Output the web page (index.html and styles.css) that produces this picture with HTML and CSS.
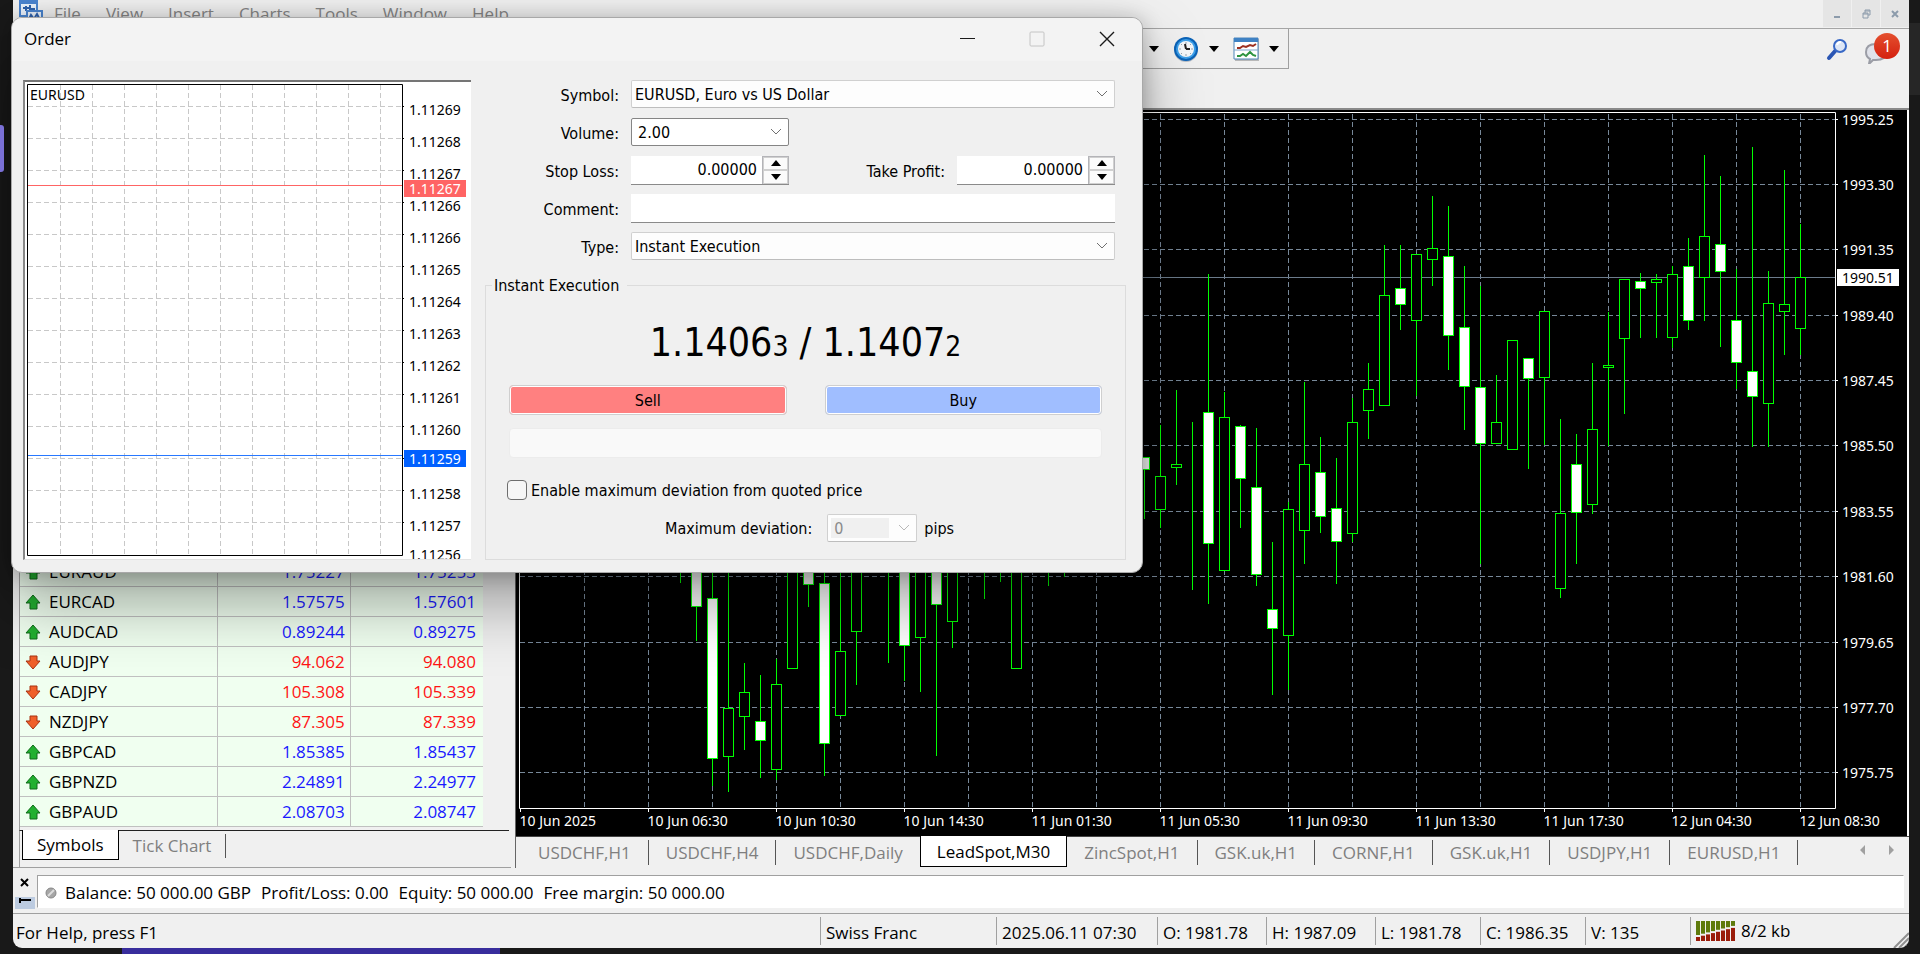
FILE: index.html
```html
<!DOCTYPE html>
<html lang="en">
<head>
    <meta charset="utf-8">
    <title>Trading Terminal</title>
    <link rel="stylesheet" href="styles.css">
</head>

<body>
    <div class="desk-shade"></div>
    <div class="desk-pill"></div>
    <div class="desk-task"></div>

    <div class="app">
        <header class="menubar">
            <svg class="app-logo" width="24" height="20" viewBox="0 0 24 20">
                <path d="M1 1h17v15h-17z" fill="#eaf2fc" stroke="#4a84cf" stroke-width="2"/>
                <path d="M1 1h17v3h-17z" fill="#4a84cf"/>
                <path d="M4 8h3v-2v5M8 8h3v-3v6M12 9h4" fill="none" stroke="#2f62ad" stroke-width="2"/>
                <path d="M8 11h15v9h-15z" fill="#eaf2fc" stroke="#4a84cf" stroke-width="2"/>
                <path d="M10 19l2-4 3 4 3-5 2 4" fill="none" stroke="#2f62ad" stroke-width="2"/>
            </svg>
            <nav class="menu">
                <a href="#">File</a>
                <a href="#">View</a>
                <a href="#">Insert</a>
                <a href="#">Charts</a>
                <a href="#">Tools</a>
                <a href="#">Window</a>
                <a href="#">Help</a>
            </nav>
            <div class="mdi">
                <button type="button" aria-label="Minimize"><svg width="9" height="12" viewBox="0 0 9 12"><path d="M1 9h6" stroke="#8c9bab" stroke-width="2"/></svg></button>
                <button type="button" aria-label="Restore"><svg width="9" height="10" viewBox="0 0 9 10"><path d="M3 4v-3h5v5h-2M1 4h5v5h-5zM1 5h5M3 2h5" fill="none" stroke="#8c9bab"/></svg></button>
                <button type="button" aria-label="Close"><svg width="8" height="8" viewBox="0 0 8 8"><path d="M1 1l6 6M7 1l-6 6" stroke="#8c9bab" stroke-width="2"/></svg></button>
            </div>
        </header>

        <div class="toolbar">
            <div class="tools">
                <svg class="drop" width="10" height="6" viewBox="0 0 10 6"><path d="M0 0h10l-5 6z"/></svg>
                <svg class="tool" width="28" height="28" viewBox="0 0 28 28">
                    <circle cx="14" cy="15" r="12" fill="#b9bec6"/>
                    <circle cx="14" cy="14" r="12" fill="#0b63b8"/>
                    <circle cx="14" cy="14" r="10" fill="#3da0ea"/>
                    <circle cx="14" cy="14" r="8" fill="#f4f7fa"/>
                    <path d="M14 7v2M14 19v2M7 14h2M19 14h2M9 9l1 1M19 9l-1 1M9 19l1-1M19 19l-1-1" stroke="#9aa4ae"/>
                    <path d="M14 14l-1-5M14 14h4" stroke="#222" stroke-width="2"/>
                </svg>
                <svg class="drop" width="10" height="6" viewBox="0 0 10 6"><path d="M0 0h10l-5 6z"/></svg>
                <svg class="tool" width="28" height="28" viewBox="0 0 28 28">
                    <path d="M3 4h24v22h-24z" fill="#b8b8b8"/>
                    <path d="M2 3h24v21h-24z" fill="#fff" stroke="#4f86bb"/>
                    <path d="M2 3h24v4h-24z" fill="#3f82c4"/>
                    <path d="M2 15h24" stroke="#7fa6cc" stroke-width="1"/>
                    <path d="M5 13h3l3-2 3 1 4-2 3 1 3-2" fill="none" stroke="#9c3020" stroke-width="2"/>
                    <path d="M5 21h3l3-2 3 2 4-4 3 3 3 1" fill="none" stroke="#2e9440" stroke-width="2"/>
                </svg>
                <svg class="drop" width="10" height="6" viewBox="0 0 10 6"><path d="M0 0h10l-5 6z"/></svg>
            </div>
            <div class="tools-right">
                <svg width="24" height="24" viewBox="0 0 24 24">
                    <path d="M4 20l7-8" stroke="#2b56b4" stroke-width="4" stroke-linecap="round"/>
                    <circle cx="15" cy="8" r="6" fill="#dde6f6" stroke="#3868c6" stroke-width="2"/>
                    <path d="M12 7q1-3 4-3" fill="none" stroke="#fff" stroke-width="2"/>
                </svg>
                <button type="button" class="chat" aria-label="Messages">
                    <svg width="24" height="24" viewBox="0 0 24 24">
                        <path d="M2 12q0-8 10-8t10 8-10 8h-3l-4 4 1-5q-4-2-4-7z" fill="#e0e2ea" stroke="#9b9da6" stroke-width="2"/>
                    </svg>
                    <span class="badge">1</span>
                </button>
            </div>
        </div>

        <main class="work">
            <section class="market">
                <div class="quotes">
                    <table>
                        <tbody id="quotes"></tbody>
                    </table>
                </div>
                <div class="market-tabs">
                    <button type="button" class="active">Symbols</button>
                    <button type="button">Tick Chart</button>
                </div>
            </section>

            <section class="chart-win">
                <svg class="chart" id="chart" viewBox="516 110 1391 726"></svg>
                <div class="chart-tabs">
                    <button type="button">USDCHF,H1</button>
                    <button type="button">USDCHF,H4</button>
                    <button type="button">USDCHF,Daily</button>
                    <button type="button" class="active">LeadSpot,M30</button>
                    <button type="button">ZincSpot,H1</button>
                    <button type="button">GSK.uk,H1</button>
                    <button type="button">CORNF,H1</button>
                    <button type="button">GSK.uk,H1</button>
                    <button type="button">USDJPY,H1</button>
                    <button type="button">EURUSD,H1</button>
                    <svg class="tab-arrows" width="34" height="12" viewBox="0 0 34 12"><path d="M5 1v10l-5-5zM29 1v10l5-5z" fill="#a0a0a0"/></svg>
                </div>
            </section>
        </main>

        <section class="terminal">
            <div class="terminal-side">
                <svg width="20" height="34" viewBox="0 0 20 34">
                    <path d="M0 22h20v12h-20z" fill="#bccbe0"/>
                    <path d="M6 4l7 7M13 4l-7 7" stroke="#000" stroke-width="2"/>
                    <path d="M5 23v5M4 25h12" stroke="#000" stroke-width="2" fill="none"/>
                </svg>
            </div>
            <div class="balance">
                <svg width="12" height="12" viewBox="0 0 12 12"><circle cx="6" cy="6" r="5" fill="#a6a6a6" stroke="#878787"/><path d="M3 9l6-6" stroke="#ddd" stroke-width="2"/></svg>
                <span>Balance: 50 000.00 GBP</span>
                <span>Profit/Loss: 0.00</span>
                <span>Equity: 50 000.00</span>
                <span>Free margin: 50 000.00</span>
            </div>
        </section>

        <footer class="status">
            <span class="help">For Help, press F1</span>
            <span class="profile">Swiss Franc</span>
            <span class="time">2025.06.11 07:30</span>
            <span class="open-high">O: 1981.78</span>
            <span class="open-high">H: 1987.09</span>
            <span class="ohlc">L: 1981.78</span>
            <span class="ohlc">C: 1986.35</span>
            <span class="ohlc">V: 135</span>
            <span class="net"><svg id="signal" width="40" height="20" viewBox="0 0 40 20"></svg>8/2 kb</span>
            <svg class="grip" width="16" height="16" viewBox="0 0 16 16"><path d="M1 16l15-15M6 16l10-10M11 16l5-5" stroke="#8f8f8f" stroke-width="2"/></svg>
        </footer>
    </div>

    <form class="order">
        <div class="order-title">
            <h1>Order</h1>
            <button type="button" aria-label="Minimize"><svg width="16" height="16" viewBox="0 0 16 16"><path d="M1 7.5h15" stroke="#1a1a1a" stroke-width="1"/></svg></button>
            <button type="button" aria-label="Maximize" disabled><svg width="16" height="16" viewBox="0 0 16 16"><rect x="1" y="1" width="14" height="14" rx="1" fill="none" stroke="#c4c4c4" stroke-width="1"/></svg></button>
            <button type="button" aria-label="Close"><svg width="16" height="16" viewBox="0 0 16 16"><path d="M1 1l14 14M15 1l-14 14" stroke="#1a1a1a" stroke-width="1.4"/></svg></button>
        </div>
        <div class="order-body">
            <svg class="ticks" id="ticks" viewBox="25 82 446 477"></svg>

            <div class="order-form">
                <div class="fields">
                    <label for="symbol">Symbol:</label>
                    <div class="combo">
                        <select id="symbol"><option>EURUSD, Euro vs US Dollar</option></select>
                        <svg width="12" height="8" viewBox="0 0 12 8"><path d="M1 1l5 5 5-5"/></svg>
                    </div>
                    <label for="volume">Volume:</label>
                    <div class="combo volume">
                        <select id="volume"><option>2.00</option></select>
                        <svg width="12" height="8" viewBox="0 0 12 8"><path d="M1 1l5 5 5-5"/></svg>
                    </div>
                    <label for="sl">Stop Loss:</label>
                    <div class="pair">
                        <div class="spin">
                            <input type="text" id="sl" value="0.00000">
                            <div class="spin-btns">
                                <button type="button" aria-label="Up"><svg width="10" height="6" viewBox="0 0 10 6"><path d="M0 6h10l-5-6z"/></svg></button>
                                <button type="button" aria-label="Down"><svg width="10" height="6" viewBox="0 0 10 6"><path d="M0 0h10l-5 6z"/></svg></button>
                            </div>
                        </div>
                        <label for="tp">Take Profit:</label>
                        <div class="spin">
                            <input type="text" id="tp" value="0.00000">
                            <div class="spin-btns">
                                <button type="button" aria-label="Up"><svg width="10" height="6" viewBox="0 0 10 6"><path d="M0 6h10l-5-6z"/></svg></button>
                                <button type="button" aria-label="Down"><svg width="10" height="6" viewBox="0 0 10 6"><path d="M0 0h10l-5 6z"/></svg></button>
                            </div>
                        </div>
                    </div>
                    <label for="comment">Comment:</label>
                    <input type="text" id="comment" class="comment">
                    <label for="type">Type:</label>
                    <div class="combo">
                        <select id="type"><option>Instant Execution</option></select>
                        <svg width="12" height="8" viewBox="0 0 12 8"><path d="M1 1l5 5 5-5"/></svg>
                    </div>
                </div>

                <fieldset class="exec">
                    <legend>Instant Execution</legend>
                    <p class="price">1.1406<small>3</small> / 1.1407<small>2</small></p>
                    <div class="deal">
                        <button type="button" class="sell">Sell</button>
                        <button type="button" class="buy">Buy</button>
                    </div>
                    <div class="result"></div>
                    <label class="check"><input type="checkbox">Enable maximum deviation from quoted price</label>
                    <div class="deviation">
                        <label for="dev">Maximum deviation:</label>
                        <div class="combo">
                            <select id="dev" disabled><option>0</option></select>
                            <svg width="12" height="8" viewBox="0 0 12 8"><path d="M1 1l5 5 5-5"/></svg>
                        </div>
                        <span>pips</span>
                    </div>
                </fieldset>
            </div>
        </div>
    </form>

    <script src="script.js"></script>
</body>
</html>
```
FILE: styles.css
```css
* {box-sizing: border-box;}

body {
    margin: 0;
    height: 100vh;
    overflow: hidden;
    background: #191919;
    color: #000;
    font-family: "Open Sans", "Noto Sans", sans-serif;
    font-size: 17px;
}

button, input, select {
    font: inherit;
    color: inherit;
    border: 0;
    padding: 0;
    margin: 0;
}

svg {display: block; flex: none;}

/* what shows of the desktop behind the windows */
.desk-shade {
    position: absolute;
    right: 0;
    top: 23px;
    width: 12px;
    height: 72px;
    background: #262626;
}

.desk-pill {
    position: absolute;
    z-index: 1;
    left: 0;
    top: 125px;
    width: 4px;
    height: 47px;
    border-radius: 0 3px 3px 0;
    background: #7a70d6;
}

.desk-task {
    position: absolute;
    left: 122px;
    bottom: 0;
    width: 378px;
    height: 8px;
    background: #382d9c;
}

/* main window */
.app {
    position: relative;
    display: flex;
    flex-direction: column;
    height: calc(100vh - 6px);
    margin: 0 11px 0 13px;
    overflow: hidden;
    background: #f0f0f0;
    border-radius: 0 0 9px 9px;
}

.menubar {
    display: flex;
    height: 29px;
    padding-left: 6px;
    border-bottom: 1px solid #a5a5a5;
}

.menu {
    display: flex;
    flex: 1;
    gap: 25px;
    padding-left: 11px;
    line-height: 28px;
}

.menu a {color: #858585; text-decoration: none;}

.mdi {display: flex; gap: 1px; height: 27px;}

.mdi button {
    display: flex;
    align-items: center;
    justify-content: center;
    width: 28px;
    background: #e5e5e5;
}

.toolbar {
    display: flex;
    justify-content: space-between;
    height: 79px;
}

.tools {
    display: flex;
    align-items: center;
    justify-content: flex-end;
    gap: 9px;
    width: 1276px;
    height: 40px;
    padding-right: 9px;
    border-right: 1px solid #a0a0a0;
    border-bottom: 1px solid #a0a0a0;
}

.tool {margin-left: 4px;}

.tools-right {
    display: flex;
    gap: 15px;
    padding: 9px 21px 0 0;
}

.chat {position: relative; width: 24px; height: 28px; background: none;}

.badge {
    position: absolute;
    left: 10px;
    top: -5px;
    width: 26px;
    height: 26px;
    border-radius: 50%;
    background: linear-gradient(#e4502f, #d4200f);
    color: #fff;
    font-size: 17px;
    line-height: 26px;
    text-align: center;
}

.work {display: flex; flex: 1; min-height: 0; gap: 4px;}

/* market watch */
.market {
    display: flex;
    flex-direction: column;
    width: 498px;
    padding-left: 6px;
    border-bottom: 1px solid #a0a0a0;
}

.quotes {
    display: flex;
    flex: 1;
    flex-direction: column;
    justify-content: flex-end;
    min-height: 0;
    margin-right: 2px;
    padding-bottom: 3px;
    border-left: 1px solid #a0a0a0;
    border-bottom: 1px solid #222;
}

.quotes table {
    width: 463px;
    border-spacing: 0;
    background: #f0fff0;
}

.quotes td {
    width: 132px;
    height: 30px;
    padding: 0 5px;
    border-right: 1px solid #c0c0c0;
    border-bottom: 1px solid #c0c0c0;
    line-height: 28px;
    text-align: right;
}

.quotes td:first-child {width: 198px; text-align: left;}
.quotes td:last-child {padding-right: 7px; border-right: 0;}
.quotes .up {color: #1a1aff;}
.quotes .down {color: #ff1414;}

.pair-name {display: flex; align-items: center; gap: 7px;}

.market-tabs {display: flex; height: 36px; padding-left: 2px; border-left: 1px solid #a0a0a0;}

.market-tabs button {
    height: 30px;
    padding: 0 14px;
    background: none;
    color: #7f7f7f;
}

.market-tabs .active {
    margin-top: -1px;
    background: #fff;
    color: #000;
    border: 1px solid #000;
    border-top: 0;
}

.market-tabs button:last-child {
    height: 24px;
    margin-top: 3px;
    border-right: 1px solid #555;
    line-height: 24px;
}

/* chart window */
.chart-win {
    display: flex;
    flex: 1;
    flex-direction: column;
    min-width: 0;
    border-left: 1px solid #666;
    border-top: 2px solid #8a8a8a;
}

.chart {
    flex: 1;
    width: 100%;
    min-height: 0;
    background: #000;
    border-right: 2px solid #fff;
    font-family: "Noto Sans", sans-serif;
    font-size: 14px;
}

.chart .grid {stroke: #778899; stroke-dasharray: 5 3;}
.chart .frame {stroke: #fff; fill: none;}
.chart .bid {stroke: #6b7b8b;}
.chart .wick {stroke: #00ff00;}
.chart .body {stroke: #00ff00; fill: #000;}
.chart .body.bear {fill: #fff;}
.chart text {fill: #fff;}
.chart .tag {fill: #000;}

.chart-tabs {
    display: flex;
    align-items: flex-start;
    height: 32px;
    border-top: 1px solid #444;
}

.chart-tabs button {
    height: 25px;
    margin-top: 3px;
    padding: 0 17px;
    border-right: 1px solid #555;
    background: none;
    color: #7f7f7f;
    line-height: 24px;
}

.chart-tabs button:first-child {padding-left: 22px;}

.chart-tabs .active {
    height: 31px;
    margin: -1px 0 0 -1px;
    padding: 2px 16px 0;
    border: 1px solid #000;
    border-top: 0;
    background: #fff;
    color: #000;
}

.tab-arrows {margin: 7px 15px 0 auto;}

/* terminal and status bar */
.terminal {
    display: flex;
    height: 46px;
    padding: 7px 5px 5px 2px;
    border-bottom: 1px solid #a0a0a0;
}

.terminal-side {width: 22px;}

.balance {
    display: flex;
    flex: 1;
    align-items: center;
    gap: 10px;
    padding: 2px 0 0 7px;
    border: 1px solid #a0a0a0;
    border-right-color: #fff;
    border-bottom-color: #fff;
    background: #fff;
}

.balance svg {margin-right: -2px;}

.status {
    display: flex;
    align-items: center;
    height: 34px;
    padding-left: 3px;
    position: relative;
}

.status span {
    height: 28px;
    padding-left: 5px;
    border-left: 1px solid #a0a0a0;
    line-height: 32px;
    white-space: nowrap;
}

.status .help {flex: 1; padding: 0; border: 0;}
.status .profile {width: 176px;}
.status .time {width: 161px;}
.status .open-high {width: 109px;}
.status .ohlc {width: 105px;}
.status .net {display: flex; align-items: center; gap: 5px; width: 219px;}

.grip {position: absolute; right: 0; bottom: 0;}

/* order dialog */
.order {
    position: absolute;
    left: 11px;
    top: 17px;
    width: 1132px;
    overflow: hidden;
    border: 1px solid #a8a8a8;
    border-radius: 11px;
    background: #f0f0f0;
    box-shadow: 0 32px 64px rgba(0, 0, 0, .34), 0 2px 21px rgba(0, 0, 0, .24);
    font-family: "DejaVu Sans Condensed", "Noto Sans", sans-serif;
    font-size: 16px;
}

.order-title {
    display: flex;
    align-items: center;
    height: 43px;
    padding: 0 0 2px 12px;
    background: #f3f3f3;
}

.order-title h1 {
    flex: 1;
    margin: 0;
    font: 17px "Open Sans", sans-serif;
}

.order-title button {
    display: flex;
    justify-content: center;
    width: 70px;
    background: none;
}

.order-body {
    display: grid;
    grid-template-columns: 448px 1fr;
    gap: 14px;
    padding: 19px 16px 12px 11px;
}

.ticks {
    width: 100%;
    border: 1px solid #e3e3e3;
    border-top: 2px solid #757575;
    border-left: 2px solid #888;
    border-right: 0;
    background: #fff;
    font-family: "Noto Sans", sans-serif;
    font-size: 14px;
}

.ticks .grid {stroke: #c8c8c8; stroke-dasharray: 5 3;}
.ticks .frame {stroke: #000; fill: none;}
.ticks .tag {fill: #fff;}

.fields {
    display: grid;
    grid-template-columns: 134px 1fr;
    grid-auto-rows: 28px;
    gap: 10px 12px;
    padding-right: 11px;
    align-items: center;
}

.fields label {padding-top: 2px; text-align: right;}

.combo {position: relative; height: 28px;}

.combo select {
    width: 100%;
    height: 100%;
    padding: 0 3px;
    appearance: none;
    background: #fdfdfd;
    border: 1px solid #d0d0d0;
    border-bottom-color: #bdbdbd;
    border-radius: 2px;
}

.combo svg {
    position: absolute;
    right: 7px;
    top: 10px;
    fill: none;
    stroke: #707070;
    pointer-events: none;
}

.volume {width: 158px;}
.volume select {padding: 0 6px; border-color: #858585; background: #fff;}

.pair {display: flex; align-items: center; justify-content: space-between;}
.pair label {flex: 1; padding-right: 12px;}

.spin {
    display: flex;
    width: 158px;
    height: 29px;
    border-bottom: 1px solid #8a8a8a;
}

.spin input {
    flex: 1;
    min-width: 0;
    padding-right: 5px;
    background: #fff;
    text-align: right;
}

.spin-btns {
    display: flex;
    flex-direction: column;
    width: 27px;
    border: 1px solid #b4b4b8;
    border-bottom: 0;
}

.spin-btns button {
    display: flex;
    flex: 1;
    align-items: center;
    justify-content: center;
    background: #fbfbfb;
    border: 1px solid #d0d0d0;
}

.comment {
    height: 29px;
    background: #fff;
    border-bottom: 1px solid #8a8a8a;
}

.exec {
    height: 286px;
    margin: 14px 0 0;
    padding: 0 23px;
    border: 1px solid #dcdcdc;
}

.exec legend {
    margin-left: -17px;
    padding: 1px 8px 0 2px;
    line-height: 22px;
}

.price {
    margin: 19px 0 11px;
    font-size: 39px;
    line-height: 54px;
    text-align: center;
}

.price small {font-size: 28px;}

.deal {display: flex; gap: 38px;}

.deal button {
    flex: 1;
    height: 30px;
    border: 1px solid #cfcfcf;
    border-radius: 4px;
    box-shadow: inset 0 0 0 1px #fff;
}

.sell {background: #ff8080;}
.buy {background: #a0beff;}

.result {
    height: 30px;
    margin: 13px 0 20px;
    border: 1px solid #ececec;
    border-radius: 4px;
    background: #f9f9f9;
}

.check {display: flex; align-items: center; gap: 4px; height: 24px; margin-left: -2px;}

.check input {
    width: 20px;
    height: 20px;
    appearance: none;
    border: 1px solid #6e6e6e;
    border-radius: 4px;
    background: #f6f6f6;
}

.deviation {display: flex; align-items: center; margin-top: 12px; padding-left: 156px;}
.deviation .combo {width: 90px; margin: 0 7px 0 15px;}
.deviation select {
    padding: 0 6px;
    color: #8a8a8a;
    opacity: 1;
    background: linear-gradient(#f0f0f0, #f0f0f0) 3px 3px / 58px 20px no-repeat #fdfdfd;
}
.deviation svg {stroke: #b8b8b8;}
```
FILE: script.js
```js
function el(tag, attrs, text) {
    var node = document.createElementNS("http://www.w3.org/2000/svg", tag);
    for (var key in attrs) node.setAttribute(key, attrs[key]);
    if (text) node.textContent = text;
    return node;
}

function line(svg, x1, y1, x2, y2, cls) {
    svg.appendChild(el("line", {x1: x1, y1: y1, x2: x2, y2: y2, "class": cls}));
}

// ---- market watch
var quotes = [
    ["EURAUD", "1.75227", "1.75253", "up"],
    ["EURCAD", "1.57575", "1.57601", "up"],
    ["AUDCAD", "0.89244", "0.89275", "up"],
    ["AUDJPY", "94.062", "94.080", "down"],
    ["CADJPY", "105.308", "105.339", "down"],
    ["NZDJPY", "87.305", "87.339", "down"],
    ["GBPCAD", "1.85385", "1.85437", "up"],
    ["GBPNZD", "2.24891", "2.24977", "up"],
    ["GBPAUD", "2.08703", "2.08747", "up"]
];

var arrows = {
    up: '<svg width="17" height="16" viewBox="0 0 17 16"><path d="M8 1l7 8h-3v6h-7v-6h-4z" fill="#22b030" stroke="#0e6b18"/></svg>',
    down: '<svg width="17" height="16" viewBox="0 0 17 16"><path d="M8 15l7-8h-3v-5h-7v5h-4z" fill="#f0602a" stroke="#a83210"/></svg>'
};

document.getElementById("quotes").innerHTML = quotes.map(function (q) {
    return `<tr><td><div class="pair-name">${arrows[q[3]]}${q[0]}</div></td><td class="${q[3]}">${q[1]}</td><td class="${q[3]}">${q[2]}</td></tr>`;
}).join("");

// ---- candles: slot, high, body top, body bottom, low, 1 = bear
var candles = [
    [10, 500, 520, 540, 583, 0], [11, 500, 520, 606, 641, 1], [12, 560, 598, 758, 786, 1],
    [13, 560, 708, 756, 792, 0], [14, 663, 692, 716, 750, 0], [15, 675, 721, 740, 778, 1],
    [16, 659, 684, 769, 780, 0], [17, 540, 540, 668, 668, 0], [18, 540, 540, 584, 607, 1],
    [19, 540, 583, 743, 776, 1], [20, 540, 651, 715, 716, 0], [21, 540, 540, 631, 685, 0],
    [23, 500, 520, 540, 663, 0], [24, 540, 540, 645, 681, 1], [25, 540, 540, 637, 692, 0],
    [26, 540, 540, 604, 756, 1], [27, 540, 540, 621, 648, 0], [29, 500, 520, 540, 599, 0],
    [30, 500, 520, 540, 582, 0], [31, 540, 540, 668, 668, 0], [33, 500, 520, 540, 586, 0],
    [34, 500, 520, 540, 577, 0], [39, 457, 457, 469, 519, 1], [40, 425, 476, 509, 528, 0],
    [41, 390, 464, 467, 485, 0], [42, 422, 513, 513, 590, 0], [43, 274, 412, 543, 604, 1],
    [44, 392, 417, 570, 570, 0], [45, 425, 426, 478, 528, 1], [46, 428, 487, 574, 586, 1],
    [47, 542, 609, 628, 695, 1], [48, 502, 509, 635, 690, 0], [49, 382, 464, 530, 564, 0],
    [50, 437, 472, 516, 533, 1], [51, 458, 508, 541, 584, 1], [52, 398, 422, 533, 542, 0],
    [53, 363, 389, 410, 439, 0], [54, 245, 295, 405, 405, 0], [55, 245, 288, 304, 330, 1],
    [56, 254, 254, 320, 396, 0], [57, 196, 248, 259, 286, 0], [58, 206, 256, 335, 370, 1],
    [59, 266, 327, 386, 430, 1], [60, 286, 387, 443, 564, 1], [61, 375, 422, 443, 443, 0],
    [62, 340, 340, 449, 449, 0], [63, 358, 358, 378, 469, 1], [64, 311, 311, 377, 445, 0],
    [65, 419, 513, 588, 598, 0], [66, 434, 464, 512, 564, 1], [67, 363, 429, 504, 514, 0],
    [68, 312, 365, 367, 446, 0], [69, 279, 279, 338, 414, 0], [70, 273, 281, 288, 338, 1],
    [71, 274, 279, 282, 338, 0], [72, 266, 274, 337, 348, 0], [73, 238, 266, 320, 330, 1],
    [74, 155, 236, 277, 321, 0], [75, 176, 244, 271, 347, 1], [76, 269, 320, 362, 389, 1],
    [77, 147, 371, 396, 447, 1], [78, 271, 303, 403, 447, 0], [79, 170, 304, 311, 355, 0],
    [80, 224, 277, 328, 355, 0]
];

var prices = [[119, "1995.25"], [184, "1993.30"], [249, "1991.35"], [315, "1989.40"], [380, "1987.45"],
    [445, "1985.50"], [511, "1983.55"], [576, "1981.60"], [642, "1979.65"], [707, "1977.70"], [772, "1975.75"]];

var times = ["10 Jun 2025", "10 Jun 06:30", "10 Jun 10:30", "10 Jun 14:30", "11 Jun 01:30", "11 Jun 05:30",
    "11 Jun 09:30", "11 Jun 13:30", "11 Jun 17:30", "12 Jun 04:30", "12 Jun 08:30"];

function drawChart() {
    var svg = document.getElementById("chart");
    for (var x = 584.5; x < 1835; x += 64) line(svg, x, 114, x, 808, "grid");
    prices.forEach(function (p) {
        line(svg, 520, p[0] + .5, 1835, p[0] + .5, "grid");
        line(svg, 1835, p[0] + .5, 1838, p[0] + .5, "frame");
        svg.appendChild(el("text", {x: 1842, y: p[0] + 6}, p[1]));
    });
    line(svg, 520, 277.5, 1835, 277.5, "bid");
    candles.forEach(function (c) {
        var cx = 520.5 + 16 * c[0];
        line(svg, cx, c[1], cx, c[4], "wick");
        svg.appendChild(el("rect", {x: cx - 5, y: c[2] + .5, width: 10, height: c[3] - c[2], "class": c[5] ? "body bear" : "body"}));
    });
    svg.appendChild(el("path", {d: "M519.5 112.5H1835.5V808.5H519.5Z", "class": "frame"}));
    times.forEach(function (t, i) {
        var tx = 520.5 + 128 * i;
        line(svg, tx, 808, tx, 812, "frame");
        svg.appendChild(el("text", {x: tx - 1, y: 826}, t));
    });
    svg.appendChild(el("rect", {x: 1837, y: 269, width: 62, height: 17, fill: "#fff"}));
    svg.appendChild(el("text", {x: 1842, y: 283, "class": "tag"}, "1990.51"));
}

// ---- tick chart inside the order dialog
var ticks = ["1.11269", "1.11268", "1.11267", "1.11266", "1.11266", "1.11265", "1.11264", "1.11263",
    "1.11262", "1.11261", "1.11260", "", "1.11258", "1.11257"];

function drawTicks() {
    var svg = document.getElementById("ticks");
    for (var x = 60.5; x < 400; x += 32) line(svg, x, 85, x, 555, "grid");
    ticks.forEach(function (t, i) {
        var y = 106.5 + 32 * i;
        line(svg, 28, y, 402, y, "grid");
        line(svg, 402, y, 404, y, "frame");
        if (t) svg.appendChild(el("text", {x: 409, y: y + 8.5}, t));
    });
    svg.appendChild(el("text", {x: 409, y: 560}, "1.11256"));
    svg.appendChild(el("path", {d: "M27.5 84.5H402.5V555.5H27.5Z", "class": "frame"}));
    svg.appendChild(el("text", {x: 30, y: 100}, "EURUSD"));
    svg.appendChild(el("path", {d: "M28 185.5H402", stroke: "#ff6464"}));
    svg.appendChild(el("rect", {x: 404, y: 180, width: 62, height: 17, fill: "#ff6464"}));
    svg.appendChild(el("text", {x: 409, y: 194, "class": "tag"}, "1.11267"));
    svg.appendChild(el("path", {d: "M28 455.5H402", stroke: "#2878ff"}));
    svg.appendChild(el("rect", {x: 404, y: 450, width: 62, height: 17, fill: "#0060ff"}));
    svg.appendChild(el("text", {x: 409, y: 464, "class": "tag"}, "1.11259"));
}

// ---- connection bars
function drawSignal() {
    var svg = document.getElementById("signal");
    for (var i = 0; i < 8; i++) {
        var split = 15 - i * 1.3;
        svg.appendChild(el("rect", {x: i * 5, y: 0, width: 4, height: split - 1, fill: "#5e7a0c"}));
        svg.appendChild(el("rect", {x: i * 5, y: split + 1, width: 4, height: 19 - split, fill: "#9a1c0a"}));
    }
}

drawChart();
drawTicks();
drawSignal();
```
